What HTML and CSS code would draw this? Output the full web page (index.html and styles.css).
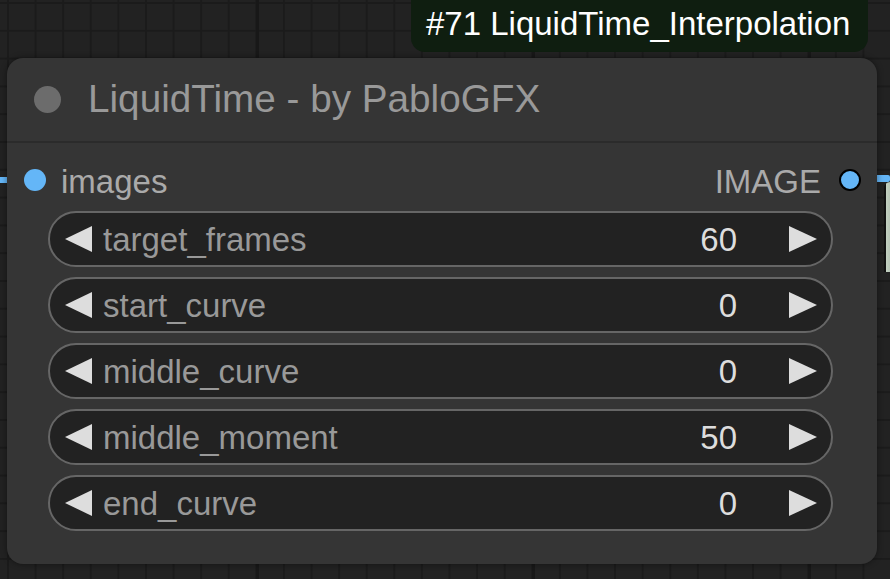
FILE: index.html
```html
<!DOCTYPE html>
<html>
<head>
<meta charset="utf-8">
<link rel="stylesheet" href="styles.css">
</head>
<body>
<div class="canvas">
  <div class="link link-left"></div>
  <div class="link link-right"></div>
  <div class="peek"></div>
  <div class="badge">#71 LiquidTime_Interpolation</div>
  <div class="node">
    <div class="title">
      <span class="title-dot"></span>
      <span class="title-text">LiquidTime - by PabloGFX</span>
    </div>
    <div class="body">
      <div class="slots">
        <div class="slot-in"><span class="dot"></span><span class="slot-label">images</span></div>
        <div class="slot-out"><span class="slot-label">IMAGE</span><span class="dot dot-out"></span></div>
      </div>
      <div class="widgets">
        <div class="widget"><span class="arrow-l"></span><span class="w-label">target_frames</span><span class="w-value">60</span><span class="arrow-r"></span></div>
        <div class="widget"><span class="arrow-l"></span><span class="w-label">start_curve</span><span class="w-value">0</span><span class="arrow-r"></span></div>
        <div class="widget"><span class="arrow-l"></span><span class="w-label">middle_curve</span><span class="w-value">0</span><span class="arrow-r"></span></div>
        <div class="widget"><span class="arrow-l"></span><span class="w-label">middle_moment</span><span class="w-value">50</span><span class="arrow-r"></span></div>
        <div class="widget"><span class="arrow-l"></span><span class="w-label">end_curve</span><span class="w-value">0</span><span class="arrow-r"></span></div>
      </div>
    </div>
  </div>
</div>
</body>
</html>
```
FILE: styles.css
```css
html, body {
  margin: 0;
  padding: 0;
  width: 890px;
  height: 579px;
  overflow: hidden;
  background: #222;
}
.canvas {
  position: relative;
  width: 890px;
  height: 579px;
  overflow: hidden;
  font-family: "Liberation Sans", Arial, sans-serif;
  background-color: #222;
  background-image:
    linear-gradient(to right, #181818 0, #181818 3px, transparent 3px),
    linear-gradient(to right, #1b1b1b 0, #1b1b1b 2px, transparent 2px),
    linear-gradient(to bottom, #1b1b1b 0, #1b1b1b 2px, transparent 2px);
  background-size: 276px 100%, 27.6px 100%, 100% 27.8px;
  background-position: 256px 0, 7px 0, 0 2px;
}
.link {
  position: absolute;
  background: #64b6f7;
}
.link-left {
  left: 0;
  top: 177px;
  width: 10px;
  height: 6px;
}
.link-right {
  left: 874px;
  top: 175px;
  width: 16px;
  height: 7px;
  border-radius: 2px;
}
.peek {
  position: absolute;
  left: 884px;
  top: 182px;
  width: 10px;
  height: 90px;
  background: linear-gradient(to right, #111 0, #111 2px, #c4d2c3 2px, #a9b8a8 100%);
  border-radius: 6px 0 0 0;
}
.badge {
  position: absolute;
  left: 411px;
  top: -20px;
  width: 457px;
  height: 72px;
  box-sizing: border-box;
  padding: 25px 0 0 15px;
  background: #0f1e10;
  border-radius: 14px;
  color: #fff;
  font-size: 33px;
  line-height: 37px;
  white-space: nowrap;
}
.node {
  position: absolute;
  left: 7px;
  top: 58px;
  width: 870px;
  height: 506px;
  background: #353535;
  border-radius: 16px;
  box-shadow: 0 0 6px rgba(0, 0, 0, 0.45);
  display: flex;
  flex-direction: column;
}
.title {
  height: 83px;
  border-bottom: 2px solid #2b2b2b;
  display: flex;
  align-items: center;
}
.title-dot {
  width: 27px;
  height: 27px;
  border-radius: 50%;
  background: #6c6c6c;
  margin-left: 27px;
  flex: none;
}
.title-text {
  margin-left: 27px;
  font-size: 38.7px;
  line-height: 1;
  color: #999;
  white-space: nowrap;
}
.body {
  display: flex;
  flex-direction: column;
  padding-top: 11px;
}
.slots {
  height: 52px;
  display: flex;
  align-items: center;
  justify-content: space-between;
}
.slot-in, .slot-out {
  display: flex;
  align-items: center;
}
.slot-in {
  margin-left: 17px;
}
.slot-out {
  margin-right: 16px;
}
.slot-label {
  font-size: 33px;
  line-height: 1;
  color: #aaa;
  position: relative;
  top: 1px;
}
.slot-in .slot-label {
  margin-left: 15px;
}
.slot-out .slot-label {
  margin-right: 18px;
}
.dot {
  width: 22px;
  height: 22px;
  border-radius: 50%;
  background: #64b6f7;
  flex: none;
}
.dot-out {
  width: 18px;
  height: 18px;
  border: 2px solid #000;
}
.widgets {
  display: flex;
  flex-direction: column;
  gap: 10px;
  margin: 5px 44px 0 41px;
}
.widget {
  height: 56px;
  box-sizing: border-box;
  border: 2px solid #666;
  border-radius: 28px;
  background: #222;
  display: flex;
  align-items: center;
  padding: 0 14px 0 15px;
}
.arrow-l, .arrow-r {
  width: 0;
  height: 0;
  border-top: 13px solid transparent;
  border-bottom: 13px solid transparent;
  flex: none;
}
.arrow-l {
  border-right: 27px solid #ddd;
}
.arrow-r {
  border-left: 28px solid #ddd;
}
.w-label {
  margin-left: 11px;
  font-size: 33px;
  line-height: 1;
  color: #999;
  flex: 1;
}
.w-value {
  font-size: 33px;
  line-height: 1;
  color: #ddd;
  margin-right: 52px;
}
```
